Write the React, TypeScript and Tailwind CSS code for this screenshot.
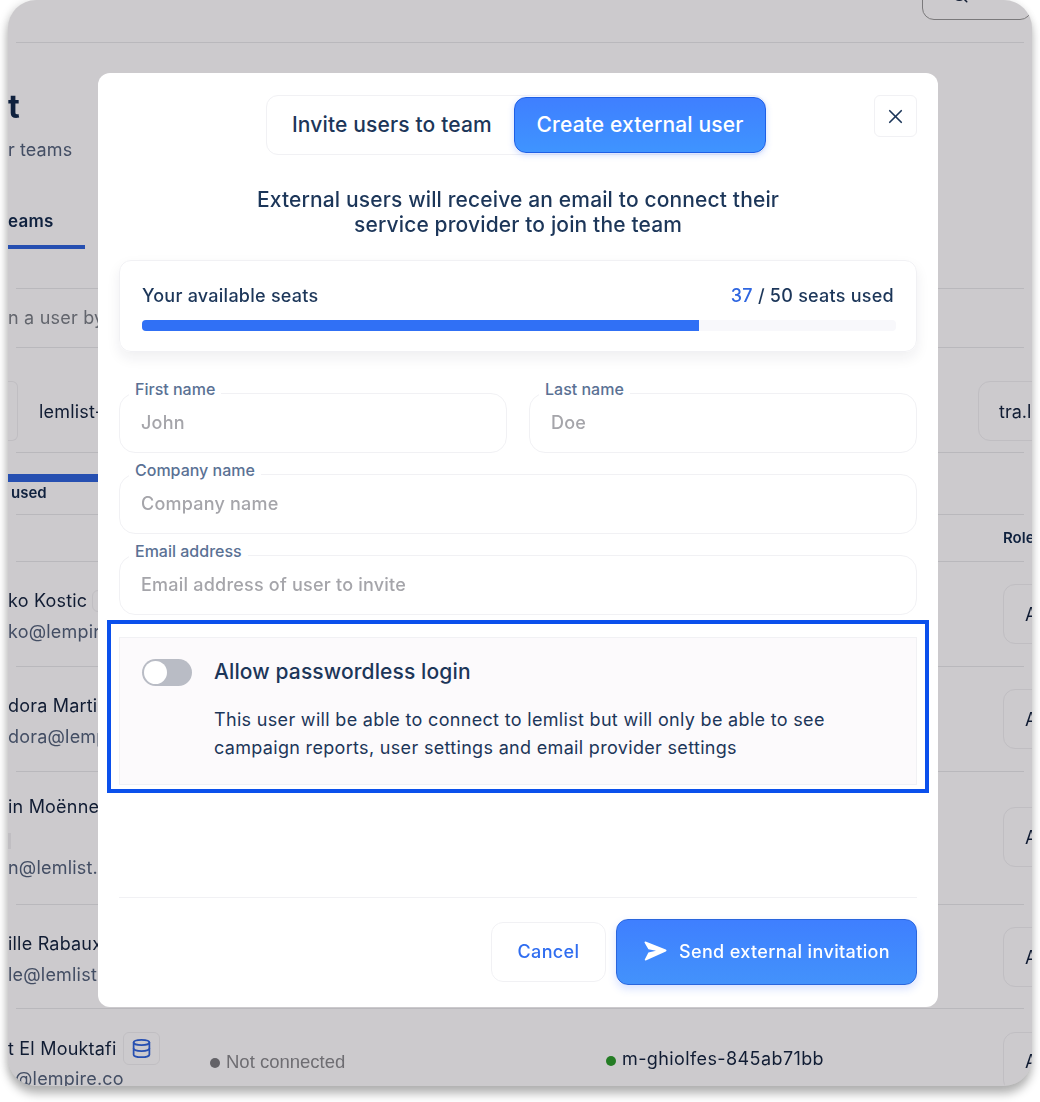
import { Database, Search, X } from 'lucide-react';

const people = [
  { name: 'ko Kostic', email: 'ko@lempire.co', row: 'h-[104px] pt-[26px]', role: 'mt-[-4px]', chip: true },
  { name: 'dora Martin', email: 'dora@lempire.co', row: 'h-[104px] pt-[26px]', role: 'mt-[-4px]' },
  { name: 'in Moënne', email: 'n@lemlist.com', row: 'h-[132px] pt-[22px]', role: 'mt-[13px]', bar: true },
  { name: 'ille Rabaux', email: 'le@lemlist.com', row: 'h-[103px] pt-[26px]', role: 'mt-[-4px]' },
];

function Divider() {
  return <div className="mx-2 h-px shrink-0 bg-[#e8e8ea]" />;
}

function RoleChip({ className }: { className?: string }) {
  return (
    <div className={`mr-[-60px] flex h-[60px] w-[89px] shrink-0 items-center rounded-xl border border-[#f0f0f2] pl-[21px] text-[18px] text-[#14233f] ${className ?? ''}`}>
      A
    </div>
  );
}

function Field({ label, placeholder, className }: { label: string; placeholder: string; className?: string }) {
  return (
    <div className={`relative h-[60px] ${className ?? ''}`}>
      <input
        placeholder={placeholder}
        className="h-full w-full rounded-2xl border border-[#f1f1f4] bg-white px-[21px] pb-[2px] text-[18px] tracking-[0.22px] text-[#14233f] placeholder:text-[#a5a5aa]"
      />
      <span className="absolute left-[10px] top-[-14px] bg-white px-[6px] text-[16px] leading-[20px] text-[#5a7194]">{label}</span>
    </div>
  );
}

function SendIcon() {
  return (
    <svg width="23" height="20" viewBox="0 0 23 20" fill="white" className="shrink-0">
      <path d="M1.6 0.4 L21.8 8.6 Q23.2 9.6 21.8 10.6 L1.8 19.4 Q0.4 19.6 0.9 18.2 L4.4 11.4 L12 9.7 L4.4 8.2 L0.6 1.8 Q0.3 0.2 1.6 0.4 Z" />
    </svg>
  );
}

function Modal() {
  return (
    <div className="absolute left-[90px] top-[73px] flex h-[934px] w-[840px] flex-col rounded-xl bg-white px-[21px] pt-[22px] font-[450] text-[#1c3659]">
      <div className="flex items-start">
        <div className="ml-[147px] flex h-[60px] w-[500px] items-center rounded-xl border border-[#f1f1f4] pl-[25px]">
          <span className="w-[222px] shrink-0 text-[21px] tracking-[0.15px]">Invite users to team</span>
          <span className="flex h-[56px] w-[252px] shrink-0 items-center justify-center rounded-xl border border-[#1e5fe6] bg-gradient-to-b from-[#3f7fff] to-[#3f94ff] text-[21px] tracking-[0.15px] text-white shadow-[0_2px_6px_rgba(60,110,255,0.25)]">
            Create external user
          </span>
        </div>
        <button className="ml-auto flex h-[42px] w-[43px] items-center justify-center rounded-md border border-[#f1f1f4]">
          <X size={23} strokeWidth={1.75} />
        </button>
      </div>

      <p className="mt-[32px] text-center text-[21px] leading-[25px] tracking-[0.14px]">
        External users will receive an email to connect their
        <br />
        service provider to join the team
      </p>

      <div className="mt-[23px] h-[92px] rounded-xl border border-[#f1f1f4] px-[22px] pt-[23px] shadow-[0_6px_14px_rgba(30,30,60,0.07)]">
        <div className="flex justify-between text-[18px] leading-[24px] tracking-[0.25px]">
          <span>Your available seats</span>
          <span>
            <span className="text-[#2f66e0]">37</span> / 50 seats used
          </span>
        </div>
        <div className="mt-[12px] h-[11px] w-[754px] rounded-sm bg-[#f8f8fb]">
          <div className="h-full w-[557px] rounded-l-sm bg-[#3070f5]" />
        </div>
      </div>

      <div className="mt-[41px] flex gap-[22px]">
        <Field label="First name" placeholder="John" className="flex-1" />
        <Field label="Last name" placeholder="Doe" className="flex-1" />
      </div>
      <Field label="Company name" placeholder="Company name" className="mt-[21px]" />
      <Field label="Email address" placeholder="Email address of user to invite" className="mt-[21px]" />

      <div className="relative mt-[22px] h-[148px] shrink-0 border border-[#f1f1f4] bg-[#fcfafc] pl-[22px] pt-[21px]">
        <div className="flex h-[27px] items-center gap-[22px]">
          <div className="flex h-[27px] w-[50px] items-center rounded-full bg-[#b9bcc5] pl-[2px]">
            <div className="h-[23px] w-[23px] rounded-full bg-white" />
          </div>
          <span className="mt-[-2px] text-[21px] tracking-[0.12px]">Allow passwordless login</span>
        </div>
        <p className="mt-[20px] pl-[72px] text-[18px] leading-[28px] font-normal tracking-[0.32px]">
          This user will be able to connect to lemlist but will only be able to see
          <br />
          campaign reports, user settings and email provider settings
        </p>
        {/* annotation frame drawn on top of the screenshot */}
        <div className="pointer-events-none absolute left-[-13px] right-[-13px] top-[-18px] bottom-[-9px] border-4 border-[#0b50ec]" />
      </div>

      <div className="mt-[112px] h-px shrink-0 bg-[#f1f1f4]" />
      <div className="mt-[21px] flex items-center justify-end gap-[10px]">
        <button className="h-[60px] w-[115px] rounded-xl border border-[#f1f1f4] pb-[2px] text-[18px] tracking-[0.35px] text-[#2f6df0]">Cancel</button>
        <button className="flex h-[66px] w-[301px] items-center gap-[12px] rounded-xl border border-[#2a66dd] bg-gradient-to-b from-[#3f7fff] to-[#4392fb] pb-[2px] pl-[27px] text-[18px] tracking-[0.36px] text-white shadow-[0_4px_8px_rgba(60,110,255,0.2)]">
          <SendIcon />
          Send external invitation
        </button>
      </div>
    </div>
  );
}

export default function App() {
  return (
    <div className="h-[1102px] w-[1040px] bg-white pl-2 font-['Inter',sans-serif]">
      <div className="relative flex h-[1086px] w-[1024px] flex-col overflow-hidden rounded-[28px] bg-white shadow-[0_8px_10px_rgba(0,0,0,0.28),-2px_0_8px_rgba(0,0,0,0.1)]">
        <div className="flex h-[42px] shrink-0 justify-end">
          <div className="mt-[-40px] flex h-[60px] w-[110px] shrink-0 items-end rounded-xl border border-[#999] pb-[15px] pl-[28px] text-[#14233f]">
            <Search size={18} />
          </div>
        </div>
        <Divider />

        <div className="h-[245px] shrink-0 pt-[44px]">
          <div className="text-[32px] leading-[40px] font-bold text-[#12294d]">t</div>
          <div className="mt-[10px] text-[18px] leading-[26px] tracking-[0.1px] text-[#54627c]">r teams</div>
          <div className="mt-[46px] text-[17px] leading-[24px] font-semibold tracking-[0.2px] text-[#12294d]">eams</div>
          <div className="mt-[12px] h-[4px] w-[77px] bg-[#2f63dd]" />
        </div>
        <Divider />

        <div className="h-[58px] shrink-0 pt-[16px] text-[18px] leading-[26px] tracking-[0.2px] text-[#7b8088]">n a user by email</div>
        <Divider />

        <div className="flex h-[104px] shrink-0 items-start justify-between pt-[33px]">
          <div className="flex items-center">
            <div className="h-[60px] w-[10px] rounded-r-md border border-l-0 border-[#f0f0f2]" />
            <span className="ml-[21px] text-[18px] tracking-[0.2px] text-[#14233f]">lemlist-team</span>
          </div>
          <div className="mr-[-60px] flex h-[60px] w-[114px] shrink-0 items-center rounded-xl border border-[#f0f0f2] pl-[20px] text-[18px] text-[#14233f]">tra.l</div>
        </div>
        <Divider />

        <div className="h-[61px] shrink-0 pt-[21px]">
          <div className="h-[8px] w-[90px] bg-[#2f63dd]" />
          <div className="mt-[2px] pl-[3px] text-[15px] leading-[18px] font-semibold text-[#12294d]">used</div>
        </div>
        <Divider />

        <div className="flex h-[46px] shrink-0 justify-end pt-[14px] text-[15px] leading-[18px] font-semibold text-[#12294d]">
          <span className="mr-[-10px] w-[39px] overflow-hidden">Role</span>
        </div>
        <Divider />

        {people.map((p) => (
          <div key={p.name} className="contents">
            <div className={`flex shrink-0 items-start justify-between ${p.row}`}>
              <div className="text-[18px] leading-[26px] tracking-[0.2px]">
                <div className="flex items-center gap-[5px] text-[#14233f]">
                  {p.name}
                  {p.chip && <span className="h-[22px] w-[10px] rounded-l-md border border-[#f0f0f2]" />}
                </div>
                {p.bar && <div className="mt-[13px] h-[16px] w-[3px] bg-[#f0f0f2]" />}
                <div className={`text-[#54627c] ${p.bar ? 'mt-[6px]' : 'mt-[5px]'}`}>{p.email}</div>
              </div>
              <RoleChip className={p.role} />
            </div>
            <Divider />
          </div>
        ))}

        <div className="flex shrink-0 items-start pt-[23px] text-[18px] leading-[26px] tracking-[0.2px]">
          <div className="w-[202px] shrink-0">
            <div className="flex items-center gap-[7px] text-[#14233f]">
              t El Mouktafi
              <span className="flex h-[33px] w-[37px] items-center justify-center rounded-md border border-[#f0f0f2] text-[#2f63dd]">
                <Database size={21} />
              </span>
            </div>
            <div className="mt-[1px] whitespace-nowrap pl-[7px] text-[#54627c]">@lempire.co</div>
          </div>
          <div className="mt-[17px] flex w-[396px] shrink-0 items-center gap-[6px] font-['Liberation_Sans',sans-serif] text-[18.5px] tracking-normal text-[#8a8a8e]">
            <span className="mt-[2px] h-[10px] w-[10px] rounded-full bg-[#7b7b80]" />
            Not connected
          </div>
          <div className="mt-[14px] flex items-center gap-[6px] tracking-[0.4px] text-[#14233f]">
            <span className="mt-[4px] h-[10px] w-[10px] rounded-full bg-[#2c9c2c]" />
            m-ghiolfes-845ab71bb
          </div>
          <RoleChip className="ml-auto" />
        </div>

        <div className="pointer-events-none absolute inset-0 bg-[#cccacd] mix-blend-multiply" />
        <Modal />
      </div>
    </div>
  );
}
